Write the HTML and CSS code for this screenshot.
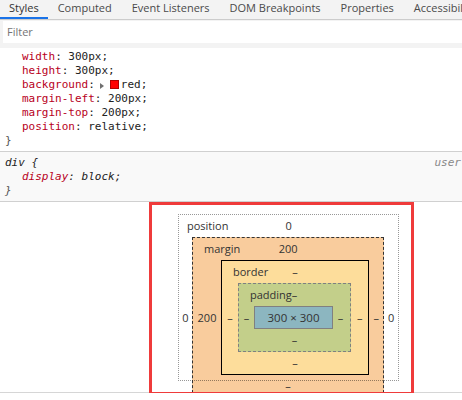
FILE: index.html
```html
<!DOCTYPE html>
<html>
<head>
<meta charset="utf-8">
<link rel="stylesheet" href="styles.css">
</head>
<body>
<div class="tabs">
  <div class="tab selected">Styles</div>
  <div class="tab">Computed</div>
  <div class="tab">Event Listeners</div>
  <div class="tab">DOM Breakpoints</div>
  <div class="tab">Properties</div>
  <div class="tab">Accessibility</div>
</div>
<div class="toolbar">
  <div class="filter">Filter</div>
</div>
<div class="section">
  <div class="line prop"><span class="name">width</span>: 300px;</div>
  <div class="line prop"><span class="name">height</span>: 300px;</div>
  <div class="line prop"><span class="name">background</span>:<span class="expander"></span><span class="swatch"></span>red;</div>
  <div class="line prop"><span class="name">margin-left</span>: 200px;</div>
  <div class="line prop"><span class="name">margin-top</span>: 200px;</div>
  <div class="line prop"><span class="name">position</span>: relative;</div>
  <div class="line brace">}</div>
</div>
<div class="section ua">
  <div class="line head"><span>div {</span><span class="origin">user</span></div>
  <div class="line prop"><span class="name">display</span>: block;</div>
  <div class="line brace">}</div>
</div>
<div class="pane">
  <div class="highlight">
    <div class="bm pos">
      <div class="bm-top"><span class="bm-label">position</span><span class="bm-val">0</span><span></span></div>
      <div class="bm-mid">
        <span class="side w13">0</span>
        <div class="bm margin">
          <div class="bm-top"><span class="bm-label">margin</span><span class="bm-val">200</span><span></span></div>
          <div class="bm-mid">
            <span class="side w28">200</span>
            <div class="bm border">
              <div class="bm-top"><span class="bm-label">border</span><span class="bm-val">–</span><span></span></div>
              <div class="bm-mid">
                <span class="side w16">–</span>
                <div class="bm padding">
                  <div class="bm-top"><span class="bm-label">padding</span><span class="bm-val">–</span><span></span></div>
                  <div class="bm-mid">
                    <span class="side w15">–</span>
                    <div class="content">300 × 300</div>
                    <span class="side w15">–</span>
                  </div>
                  <div class="bm-bot">–</div>
                </div>
                <span class="side w17">–</span>
              </div>
              <div class="bm-bot">–</div>
            </div>
            <span class="side w14">–</span>
          </div>
          <div class="bm-bot">–</div>
        </div>
        <span class="side w14">0</span>
      </div>
      <div class="bm-bot">0</div>
    </div>
  </div>
</div>
</body>
</html>
```
FILE: styles.css
```css
html, body {
  margin: 0;
  padding: 0;
  background: #ffffff;
}
body {
  font-family: "Open Sans", "DejaVu Sans", sans-serif;
  font-size: 11px;
  color: #333333;
  width: 462px;
  overflow: hidden;
}
.tabs {
  display: flex;
  flex-wrap: nowrap;
  height: 20px;
  box-sizing: border-box;
  background: #f3f3f3;
  border-bottom: 1px solid #cccccc;
  overflow: hidden;
  white-space: nowrap;
}
.tab {
  padding: 0 10px 0 10px;
  line-height: 16px;
  height: 19px;
  box-sizing: border-box;
  color: #4a4a4a;
  flex: none;
}
.tab:first-child {
  padding-left: 9px;
  padding-right: 9px;
}
.tab.selected {
  color: #333333;
  border-bottom: 2px solid #1a73e8;
}
.toolbar {
  background: #f3f3f3;
  padding: 1px 0 5px 3px;
}
.filter {
  background: #ffffff;
  height: 22px;
  line-height: 22px;
  padding-left: 4px;
  color: #757575;
}
.section {
  font-family: "DejaVu Sans Mono", "Liberation Mono", monospace;
  font-size: 11px;
  padding: 2px 0 3px 0;
  border-bottom: 1px solid #d0d0d0;
  color: #222222;
}
.section.ua {
  background: #f9f9f9;
  padding: 4px 0 3px 0;
  font-style: italic;
}
.line {
  height: 14px;
  line-height: 14px;
  white-space: nowrap;
}
.prop {
  padding-left: 22px;
}
.brace, .head {
  padding-left: 5px;
}
.brace {
  color: #555555;
}
.head {
  display: flex;
  justify-content: space-between;
}
.origin {
  color: #888888;
  padding-right: 1px;
}
.name {
  color: #b8001c;
}
.expander {
  display: inline-block;
  width: 0;
  height: 0;
  border-left: 4px solid #707070;
  border-top: 3.5px solid transparent;
  border-bottom: 3.5px solid transparent;
  margin-left: 5px;
  vertical-align: -1px;
}
.swatch {
  display: inline-block;
  width: 9px;
  height: 9px;
  background: #ff0000;
  border: 0.5px solid #b00000;
  box-sizing: border-box;
  margin: 0 2px 0 6px;
  vertical-align: -1px;
}
.pane {
  height: 190px;
  border-bottom: 1px solid #d6d6d6;
  background: #ffffff;
}
.highlight {
  margin-left: 149px;
  width: 265px;
  height: 193px;
  box-sizing: border-box;
  border: 3px solid #ef3b3b;
  padding: 9px 0 0 26px;
  overflow: hidden;
  position: relative;
}
.bm {
  display: flex;
  flex-direction: column;
  width: fit-content;
  flex: none;
  color: #333333;
}
.pos {
  height: 167px;
  box-sizing: border-box;
  padding: 1px;
  position: relative;
}
.pos::after {
  content: "";
  position: absolute;
  left: 0;
  top: 0;
  right: 0;
  bottom: 0;
  border: 1px dotted rgba(0, 0, 0, 0.4);
  pointer-events: none;
}
.margin {
  background: #f9cc9d;
  border: 1px dashed #333333;
}
.border {
  background: #fddd9b;
  border: 1px solid #000000;
}
.padding {
  background: #c3cf8a;
  border: 1px dashed #808080;
}
.bm-top {
  display: grid;
  grid-template-columns: minmax(0, 1fr) auto minmax(0, 1fr);
  align-items: center;
  height: 22px;
  line-height: 16px;
  flex: none;
}
.bm-label {
  padding-left: 11px;
  white-space: nowrap;
}
.pos > .bm-top .bm-label {
  padding-left: 8px;
}
.bm-val {
  text-align: center;
}
.bm-mid {
  display: flex;
  align-items: center;
  flex: none;
}
.bm-bot {
  height: 22px;
  line-height: 22px;
  text-align: center;
  flex: none;
}
.side {
  text-align: center;
  flex: none;
  line-height: 16px;
}
.w13 { width: 13px; }
.w14 { width: 14px; }
.w15 { width: 15px; }
.w16 { width: 16px; }
.w17 { width: 17px; }
.w28 { width: 28px; }
.content {
  width: 79px;
  height: 23px;
  box-sizing: border-box;
  background: #8cb6c0;
  border: 1px solid #808080;
  text-align: center;
  line-height: 21px;
  font-size: 11.5px;
  flex: none;
}
```
